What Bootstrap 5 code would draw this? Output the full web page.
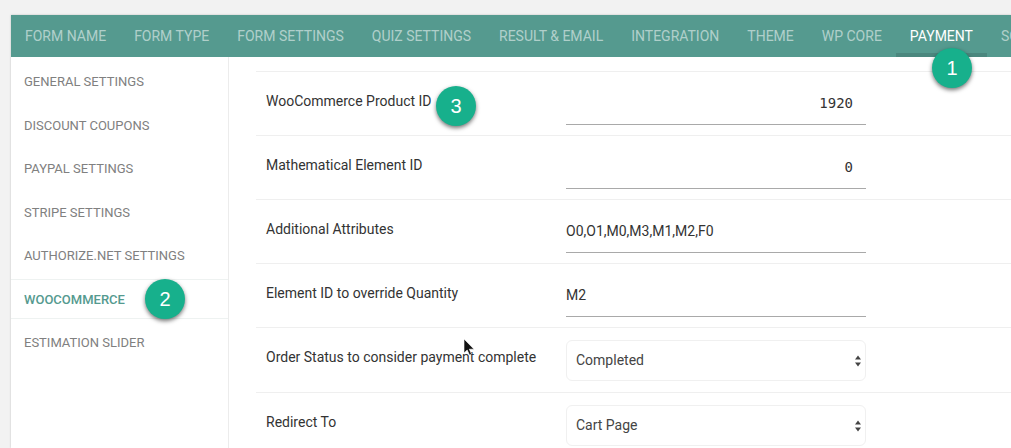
<!DOCTYPE html>
<html lang="en">
<head>
<meta charset="utf-8">
<title>Payment settings</title>
<link href="https://cdn.jsdelivr.net/npm/bootstrap@5.3.0/dist/css/bootstrap.min.css" rel="stylesheet">
<style>
html,body{height:448px;overflow:hidden}
body{background:#f2f2f2;font-family:Roboto,sans-serif;padding:15px 0 0 11px;color:#333}
.shell{background:#fff;height:433px;width:1000px;overflow:hidden;box-shadow:0 0 2px rgba(0,0,0,.2)}
.topnav{background:#559a8f;height:42px;padding-left:0;flex-wrap:nowrap}
.topnav .nav-link{color:rgba(255,255,255,.55);font-size:14px;padding:0 14px;line-height:43px;height:42px;white-space:nowrap;position:relative}
.topnav .nav-link.active{color:#fff;border-bottom:4px solid #4b877e}
.sidemenu{width:218px;flex:none;border-right:1px solid #ececec;padding-top:4px}
.sidemenu .nav-link{color:#808080;font-size:13px;height:39px;padding:0 13px;margin-bottom:4.5px;position:relative;border-top:1px solid transparent;border-bottom:1px solid transparent;line-height:39px}
.sidemenu .nav-link.active{color:#559a8f;font-weight:500;border-color:#eef2f1;height:40px;margin-bottom:3.5px}
.formarea{padding:14px 0 0 27px;flex:1}
.frow{display:flex;align-items:flex-start;border-top:1px solid #efefef;height:64px;padding-left:10px}
.frow label{width:300px;flex:none;font-size:14px;color:#333;padding-top:19px;position:relative;margin:0}
.fline{width:300px;border:0;border-bottom:1px solid #a9a9a9;border-radius:0;height:35px;margin-top:18px;padding:0 0 8px;font-size:14px;color:#333;background:transparent}
.fline:focus{box-shadow:none}
.mono{font-family:"DejaVu Sans Mono",monospace;text-align:right;padding-right:13px}
.fpick{width:300px;height:41px;margin-top:12px;font-size:14px;color:#444;border:1px solid #f0f0f0;border-radius:6px;padding:0 9px;background-position:right -1px center;--bs-form-select-bg-img:none;background-image:url("data:image/svg+xml,%3Csvg xmlns='http://www.w3.org/2000/svg' width='16' height='16'%3E%3Cpath fill='%23444' d='M8 2.500l3 4H5zM8 13.500l-3-4h6z'/%3E%3C/svg%3E");background-size:16px 16px}
.rowtall{height:65px}
.pin{position:absolute;width:40px;height:40px;border-radius:50%;background:#17b08c;color:#fff;font-family:"Liberation Sans",sans-serif;font-size:20px;line-height:40px;text-align:center;box-shadow:0 2px 4px rgba(0,0,0,.55);font-weight:400;z-index:5}
.pin1{left:932px;top:48px}
.pin2{left:134px;top:-1px}
.pin3{left:170px;top:14px}
.arrow{position:absolute;left:463px;top:339px;z-index:6}
</style>
</head>
<body>
<div class="shell">
  <ul class="nav topnav">
    <li class="nav-item"><a class="nav-link" href="#">FORM NAME</a></li>
    <li class="nav-item"><a class="nav-link" href="#">FORM TYPE</a></li>
    <li class="nav-item"><a class="nav-link" href="#">FORM SETTINGS</a></li>
    <li class="nav-item"><a class="nav-link" href="#">QUIZ SETTINGS</a></li>
    <li class="nav-item"><a class="nav-link" href="#">RESULT &amp; EMAIL</a></li>
    <li class="nav-item"><a class="nav-link" href="#">INTEGRATION</a></li>
    <li class="nav-item"><a class="nav-link" href="#">THEME</a></li>
    <li class="nav-item"><a class="nav-link" href="#">WP CORE</a></li>
    <li class="nav-item"><a class="nav-link active" href="#">PAYMENT</a></li>
    <li class="nav-item"><a class="nav-link" href="#">SCRIPTS</a></li>
  </ul>
  <div class="d-flex">
    <ul class="nav flex-column sidemenu">
      <li class="nav-item"><a class="nav-link" href="#">GENERAL SETTINGS</a></li>
      <li class="nav-item"><a class="nav-link" href="#">DISCOUNT COUPONS</a></li>
      <li class="nav-item"><a class="nav-link" href="#">PAYPAL SETTINGS</a></li>
      <li class="nav-item"><a class="nav-link" href="#">STRIPE SETTINGS</a></li>
      <li class="nav-item"><a class="nav-link" href="#">AUTHORIZE.NET SETTINGS</a></li>
      <li class="nav-item"><a class="nav-link active" href="#">WOOCOMMERCE<span class="pin pin2">2</span></a></li>
      <li class="nav-item"><a class="nav-link" href="#">ESTIMATION SLIDER</a></li>
    </ul>
    <form class="formarea">
      <div class="frow"><label>WooCommerce Product ID<span class="pin pin3">3</span></label><input class="form-control fline mono" value="1920"></div>
      <div class="frow"><label>Mathematical Element ID</label><input class="form-control fline mono" value="0"></div>
      <div class="frow"><label>Additional Attributes</label><input class="form-control fline" value="O0,O1,M0,M3,M1,M2,F0"></div>
      <div class="frow"><label>Element ID to override Quantity</label><input class="form-control fline" value="M2"></div>
      <div class="frow rowtall"><label>Order Status to consider payment complete</label><select class="form-select fpick"><option>Completed</option></select></div>
      <div class="frow rowtall"><label>Redirect To</label><select class="form-select fpick"><option>Cart Page</option></select></div>
    </form>
  </div>
</div>
<span class="pin pin1">1</span>
<svg class="arrow" width="12" height="17" viewBox="0 0 12 17"><path d="M1 0v14l3.200-3 2.300 5 2-1-2.200-4.800H11z" fill="#111" stroke="#fff" stroke-width=".6"/></svg>
<script src="https://cdn.jsdelivr.net/npm/bootstrap@5.3.0/dist/js/bootstrap.bundle.min.js"></script>
</body>
</html>
